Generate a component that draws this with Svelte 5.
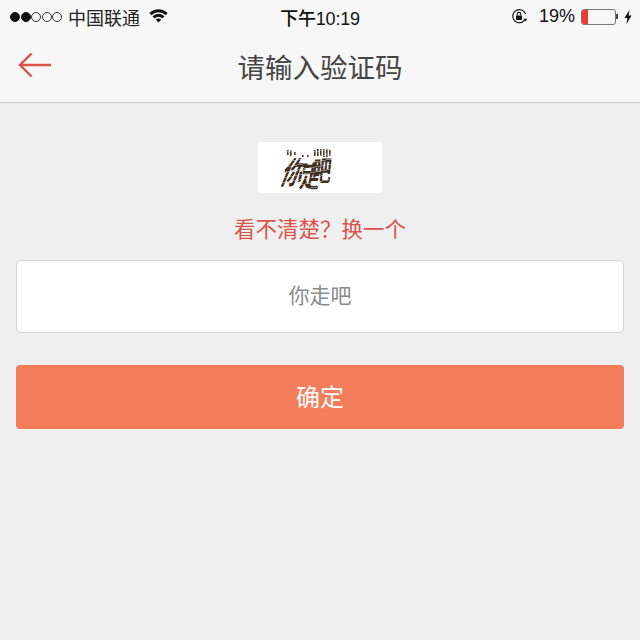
<script>
  let code = $state('');

  // top row of the distorted captcha: little ticks left over from the slicing
  const ticks = [
    [29, 8, 5], [32, 8, 6], [36, 10, 3], [44, 13, 2], [49, 13, 2],
    [56, 8, 6], [59, 7, 7], [62, 7, 7], [65, 7, 8], [68, 7, 8], [71, 8, 6]
  ];
</script>

<div class="page">
  <header class="top">
    <div class="status">
      <div class="status-left">
        <span class="signal">
          <i class="on"></i><i class="on"></i><i></i><i></i><i></i>
        </span>
        <span class="carrier">中国联通</span>
        <svg class="wifi" width="19" height="15" viewBox="0 0 19 15">
          <path d="M0.3 5 A13 13 0 0 1 18.7 5 L16.6 7.2 A10 10 0 0 0 2.4 7.2 Z" fill="#111" />
          <path d="M3.5 8.3 A8.4 8.4 0 0 1 15.5 8.3 L13.4 10.5 A5.4 5.4 0 0 0 5.6 10.5 Z" fill="#111" />
          <path d="M6.7 11.6 A3.9 3.9 0 0 1 12.3 11.6 L9.5 14.6 Z" fill="#111" />
        </svg>
      </div>
      <div class="clock">下午10:19</div>
      <div class="status-right">
        <svg class="lock" width="17" height="17" viewBox="0 0 17 17">
          <path d="M13.6 12.2 A6.6 6.6 0 1 1 14.6 6" fill="none" stroke="#111" stroke-width="1.2" />
          <path d="M12.4 10.8 L16.4 10.8 L14.4 13.4 Z" fill="#111" />
          <rect x="5" y="7.4" width="6" height="4.6" rx="0.6" fill="#111" />
          <path d="M6.2 7.6 V6.2 A1.8 1.8 0 0 1 9.8 6.2 V7.6" fill="none" stroke="#111" stroke-width="1.1" />
        </svg>
        <span class="percent">19%</span>
        <span class="battery"><span class="level"></span></span>
        <span class="nub"></span>
        <svg class="bolt" width="8" height="14" viewBox="0 0 8 14">
          <path d="M5.6 0 L0.4 8 H3.4 L2.4 14 L7.6 5.6 H4.6 Z" fill="#111" />
        </svg>
      </div>
    </div>
    <nav class="nav">
      <button class="back" type="button" aria-label="返回">
        <svg width="34" height="26" viewBox="0 0 34 26">
          <path d="M33 13 H2 M13.5 1.5 L2 13 L13.5 24.5" fill="none" stroke="#d9534a" stroke-width="2.4" />
        </svg>
      </button>
      <h1>请输入验证码</h1>
    </nav>
  </header>

  <main class="content">
    <div class="captcha">
      <svg class="noise" width="124" height="51" viewBox="0 0 124 51">
        {#each ticks as [x, y, h]}
          <rect {x} {y} width="1.6" height={h} fill="#4a3a28" />
        {/each}
      </svg>
      <span class="glyph g1">你</span>
      <span class="glyph g2">走</span>
      <span class="glyph g3">吧</span>
      <span class="slices"></span>
    </div>
    <button class="refresh" type="button">看不清楚？换一个</button>
    <input class="code" type="text" placeholder="你走吧" bind:value={code} />
    <button class="submit" type="button">确定</button>
  </main>
</div>

<style>
  :global(body) {
    margin: 0;
    background: #efefef;
  }

  .page {
    width: 640px;
    height: 640px;
    display: flex;
    flex-direction: column;
    background: #efefef;
    font-family: "Liberation Sans", "Noto Sans CJK SC", sans-serif;
    overflow: hidden;
  }

  .top {
    height: 102px;
    background: #f7f7f7;
    border-bottom: 1px solid #cfcfcf;
    flex-shrink: 0;
  }

  /* Status bar */
  .status {
    height: 33px;
    display: grid;
    grid-template-columns: 1fr auto 1fr;
    align-items: center;
    color: #111;
  }

  .status-left {
    display: flex;
    align-items: center;
    padding-left: 10px;
  }

  .signal {
    display: flex;
    gap: 0.5px;
    margin-right: 6px;
  }

  .signal i {
    width: 10px;
    height: 10px;
    border: 1px solid #333;
    border-radius: 50%;
    box-sizing: border-box;
  }

  .signal i.on {
    background: #111;
    border-color: #111;
  }

  .carrier {
    font-size: 18px;
    color: #222;
    margin-right: 9px;
  }

  .wifi {
    margin-bottom: 3px;
  }

  .clock {
    font-size: 18px;
    font-weight: 500;
    letter-spacing: -0.2px;
  }

  .status-right {
    display: flex;
    align-items: center;
    justify-content: flex-end;
    padding-right: 8px;
  }

  .percent {
    font-size: 18px;
    margin: 0 6px 0 11px;
  }

  .battery {
    width: 35px;
    height: 16px;
    box-sizing: border-box;
    border: 1px solid #777;
    border-radius: 3px;
    display: block;
  }

  .level {
    display: block;
    width: 6px;
    height: 100%;
    background: #f03a35;
    border-radius: 2px 0 0 2px;
  }

  .nub {
    width: 2px;
    height: 5px;
    background: #444;
    margin-right: 6px;
  }

  /* Nav */
  .nav {
    height: 69px;
    position: relative;
    display: flex;
    align-items: center;
    justify-content: center;
  }

  .nav h1 {
    margin: 0 0 3px;
    font-size: 27.5px;
    font-weight: 400;
    color: #444;
  }

  .back {
    position: absolute;
    left: 18px;
    top: 19px;
    padding: 0;
    border: 0;
    background: none;
    line-height: 0;
  }

  /* Form */
  .content {
    display: flex;
    flex-direction: column;
    align-items: center;
    padding: 39px 16px 0;
  }

  .captcha {
    width: 124px;
    height: 51px;
    background: #fff;
    position: relative;
    overflow: hidden;
    color: #3f2f1e;
  }

  .noise {
    position: absolute;
    left: 0;
    top: 0;
  }

  .glyph {
    position: absolute;
    font-size: 27px;
    font-weight: 700;
    line-height: 1;
    white-space: nowrap;
    transform-origin: 0 0;
  }

  .g1 {
    left: 31px;
    top: 17px;
    transform: skewX(-22deg) scale(0.8, 1.15);
  }

  .g2 {
    left: 46px;
    top: 21px;
    transform: skewX(-12deg) scale(0.75, 1.1);
  }

  .g3 {
    left: 56px;
    top: 16px;
    transform: skewX(-6deg) scale(0.7, 1.05);
  }

  /* thin white cuts so the word reads as sliced */
  .slices {
    position: absolute;
    inset: 0;
    background: repeating-linear-gradient(170deg, transparent 0 4px, rgba(255, 255, 255, 0.4) 4px 5px);
  }

  .refresh {
    margin-top: 22px;
    padding: 0;
    border: 0;
    background: none;
    font: inherit;
    font-size: 21.5px;
    line-height: 30px;
    color: #d9534a;
  }

  .code {
    margin-top: 15px;
    width: 100%;
    height: 73px;
    box-sizing: border-box;
    padding: 0 0 2px;
    background: #fff;
    border: 1px solid #d4d4d4;
    border-radius: 5px;
    text-align: center;
    font: inherit;
    font-size: 21px;
    color: #333;
    outline: none;
  }

  .code::placeholder {
    color: #8a8a8a;
    opacity: 1;
  }

  .submit {
    margin-top: 32px;
    width: 100%;
    height: 64px;
    padding: 0 0 4px;
    border: 0;
    border-radius: 4px;
    background: #f47d5c;
    color: #fff;
    font: inherit;
    font-size: 24px;
  }
</style>
